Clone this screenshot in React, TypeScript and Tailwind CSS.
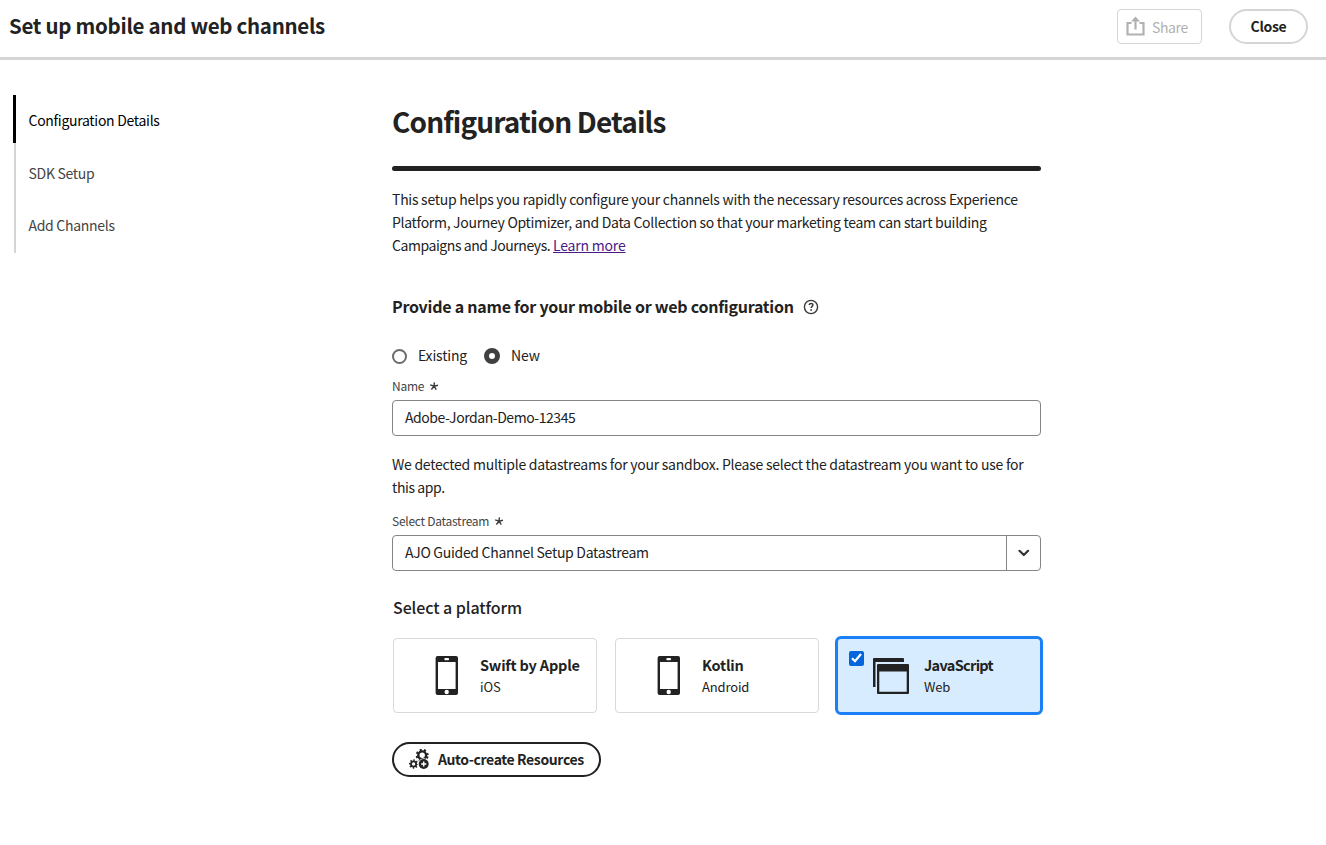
import { useState, type ReactNode } from 'react';

function ShareIcon() {
  return (
    <svg width="19" height="20" viewBox="0 0 19 20" className="-mt-px shrink-0">
      <path d="M5.5 7H1.5V18.5H17.5V7H13.5" fill="none" stroke="#b1b1b1" strokeWidth="2.2" />
      <path d="M9.5 13.5V3" stroke="#b1b1b1" strokeWidth="2.2" />
      <path d="M9.5 0.4L14 5.4H5Z" fill="#b1b1b1" />
    </svg>
  );
}

function HelpIcon() {
  return (
    <svg width="16" height="16" viewBox="0 0 16 16" fill="none" stroke="#3a3a3a" className="shrink-0">
      <circle cx="8" cy="8" r="6.6" strokeWidth="1.4" />
      <path d="M6.1 6.1C6.3 4.9 7.1 4.5 8 4.5C9.1 4.5 9.9 5.1 9.9 6.1C9.9 7.3 8.1 7.5 8.1 9.1" strokeWidth="1.4" />
      <circle cx="8.1" cy="11" r="0.9" fill="#3a3a3a" stroke="none" />
    </svg>
  );
}

function Required() {
  return (
    <svg width="8" height="8" viewBox="0 0 8 8" stroke="#3a3a3a" strokeWidth="1.4" className="shrink-0">
      <path d="M4 4.2L4.4 0.4M4 4.2L8 3.3M4 4.2L6.3 7.6M4 4.2L1.4 7.5M4 4.2L0.2 2.8" />
    </svg>
  );
}

function PhoneIcon() {
  return (
    <svg width="24" height="40" viewBox="0 0 24 40" className="shrink-0">
      <rect x="0.6" y="0" width="22.4" height="39" rx="2" fill="#222" />
      <rect x="3" y="6" width="17.6" height="27" fill="#fff" />
      <rect x="9.3" y="2.1" width="4.8" height="2.2" rx="1.1" fill="#fff" />
      <circle cx="11.7" cy="36" r="2.2" fill="#fff" />
    </svg>
  );
}

function WindowsIcon() {
  return (
    <svg width="36" height="36" viewBox="0 0 36 36" className="shrink-0">
      <path d="M0 29V1Q0 0 1 0H30Q31 0 31 1V4H2.5V29Z" fill="#222" />
      <path fillRule="evenodd" d="M5 6H35Q36 6 36 7V35Q36 36 35 36H5Q4 36 4 35V7Q4 6 5 6ZM6.3 13.5V33.8H33.7V13.5Z" fill="#222" />
    </svg>
  );
}

function GearsIcon() {
  return (
    <svg width="20" height="20" viewBox="0 0 20 20" fill="none" stroke="#222" className="-mt-px shrink-0">
      <circle cx="13.2" cy="6.3" r="3.9" strokeWidth="2.4" />
      <circle cx="13.2" cy="6.3" r="5.5" strokeWidth="2" strokeDasharray="2.1 2.22" strokeDashoffset="-1.1" />
      <circle cx="4.6" cy="15" r="2.6" strokeWidth="1.8" />
      <circle cx="4.6" cy="15" r="3.9" strokeWidth="1.6" strokeDasharray="1.4 1.663" strokeDashoffset="0.7" />
      <circle cx="14.7" cy="15" r="5.7" fill="#fff" stroke="none" />
      <circle cx="14.7" cy="15" r="5" fill="#222" stroke="none" />
      <path d="M14.7 12.4V17.6M12.1 15H17.3" stroke="#fff" strokeWidth="1.5" />
    </svg>
  );
}

function Radio({ checked, onSelect, children }: { checked: boolean; onSelect: () => void; children: ReactNode }) {
  return (
    <label className="flex items-center gap-[11px]">
      <input type="radio" name="mode" checked={checked} onChange={onSelect} className="sr-only" />
      <span
        className={
          checked
            ? 'size-4 rounded-full border-[5px] border-[#404040] bg-white'
            : 'size-[15px] rounded-full border-2 border-[#6b6b6b] bg-white'
        }
      />
      <span className="pb-[2px] tracking-[-0.17px]">{children}</span>
    </label>
  );
}

function Platform({ name, kind, tight }: { name: string; kind: string; tight?: boolean }) {
  return (
    <div className="ml-[21px] whitespace-nowrap">
      <div className={tight ? 'text-[14.5px] leading-[22px] font-bold tracking-[-0.68px]' : 'text-[14.5px] leading-[22px] font-bold tracking-[-0.2px]'}>
        {name}
      </div>
      <div className="text-[13px] leading-[21px] tracking-[-0.15px]">{kind}</div>
    </div>
  );
}

export default function App() {
  const [mode, setMode] = useState('new');
  return (
    <div className="h-[845px] overflow-hidden bg-white font-['Noto_Sans_CJK_SC',sans-serif] text-sm tracking-[-0.29px] text-[#222]">
      <header className="flex h-[60px] items-start justify-between border-b-[3px] border-[#d5d5d5] pt-[9px] pr-[18px] pl-[9px]">
        <h1 className="text-[20.5px] leading-[33px] font-bold tracking-[-0.3px]">Set up mobile and web channels</h1>
        <div className="flex gap-[27px]">
          <button disabled className="flex h-[35px] w-[85px] items-center gap-[7px] rounded border border-[#d5d5d5] pl-2 text-[#b1b1b1]">
            <ShareIcon />
            <span className="tracking-[-0.4px]">Share</span>
          </button>
          <button className="h-[35px] w-[79px] rounded-full border-2 border-[#d5d5d5] pb-px font-bold">Close</button>
        </div>
      </header>

      <div className="flex">
        <nav className="w-[392px] shrink-0 pt-[35px] pl-[13px]">
          <div className="flex h-12 items-center border-l-[3px] border-black pt-px pl-[12.5px] text-black">Configuration Details</div>
          <div className="ml-px flex h-[60px] items-center border-l-2 border-[#d5d5d5] pl-[12.5px] text-[#444]">SDK Setup</div>
          <div className="ml-px flex h-[50px] items-center border-l-2 border-[#d5d5d5] pb-[6px] pl-[12.5px] text-[#444]">Add Channels</div>
        </nav>

        <main className="w-[651px] pt-[41px]">
          <div className="w-[649px]">
            <h2 className="text-[28px] leading-10 font-bold tracking-[-0.86px]">Configuration Details</h2>
            <div className="mt-[25px] h-[5px] rounded-full bg-[#222]" />
            <p className="mt-[17px] leading-[23px] tracking-[-0.26px] whitespace-nowrap">
              This setup helps you rapidly configure your channels with the necessary resources across Experience
              <br />
              <span className="tracking-[-0.3px]">Platform, Journey Optimizer, and Data Collection so that your marketing team can start building</span>
              <br />
              <span className="tracking-[-0.44px]">Campaigns and Journeys. </span>
              <a href="#" className="tracking-[-0.18px] text-[#4b1a86] underline">Learn more</a>
            </p>

            <div className="mt-[38px] flex h-6 items-center gap-[9px]">
              <h3 className="pb-[2px] text-base font-bold tracking-[-0.25px]">Provide a name for your mobile or web configuration</h3>
              <HelpIcon />
            </div>

            <div className="mt-[27px] flex h-5 items-center gap-[17px]">
              <Radio checked={mode === 'existing'} onSelect={() => setMode('existing')}>Existing</Radio>
              <Radio checked={mode === 'new'} onSelect={() => setMode('new')}>New</Radio>
            </div>

            <div className="mt-[12px] flex h-4 items-center gap-[6px] text-xs tracking-[-0.24px] text-[#444]">
              Name <Required />
            </div>
            <div className="mt-[6px] flex h-9 items-center rounded border border-[#858585] pb-[2px] pl-3 tracking-[-0.45px]">Adobe-Jordan-Demo-12345</div>

            <p className="mt-[17px] leading-[23px] tracking-[-0.25px] whitespace-nowrap">
              We detected multiple datastreams for your sandbox. Please select the datastream you want to use for
              <br />
              <span className="tracking-[-0.4px]">this app.</span>
            </p>

            <div className="mt-[14px] flex h-4 items-center gap-[6px] text-xs tracking-[-0.26px] text-[#444]">
              Select Datastream <Required />
            </div>
            <div className="mt-[6px] flex h-9 items-center justify-between rounded border border-[#858585] pl-3">
              <span className="pb-[2px]">AJO Guided Channel Setup Datastream</span>
              <span className="flex h-full w-[34px] items-center justify-center border-l border-[#858585]">
                <svg width="12" height="8" viewBox="0 0 12 8" fill="none" stroke="#333" strokeWidth="2.2" strokeLinecap="round" strokeLinejoin="round">
                  <path d="M1.5 1.8L5.8 6L10.1 1.8" />
                </svg>
              </span>
            </div>
          </div>

          <h3 className="mt-6 ml-px text-base leading-6 font-medium tracking-[-0.08px]">Select a platform</h3>
          <div className="mt-[17px] flex h-[79px] items-center pl-px">
            <div className="mr-[18px] flex h-[75px] w-[204px] items-center rounded border border-[#d9d9d9] pl-[41px]">
              <PhoneIcon />
              <Platform name="Swift by Apple" kind="iOS" />
            </div>
            <div className="mr-4 flex h-[75px] w-[204px] items-center rounded border border-[#d9d9d9] pl-[41px]">
              <PhoneIcon />
              <Platform name="Kotlin" kind="Android" />
            </div>
            <div className="flex h-[79px] w-[208px] items-center rounded-md border-3 border-[#1b7ff5] bg-[#d7edff] pl-[11px]">
              <span className="mb-[35px] flex size-[15px] items-center justify-center rounded-xs bg-[#0265dc]">
                <svg width="11" height="10" viewBox="0 0 11 10" fill="none" stroke="#fff" strokeWidth="2.2">
                  <path d="M1 5.2L4 8.2L10 1" />
                </svg>
              </span>
              <span className="ml-[9px]"><WindowsIcon /></span>
              <div className="-ml-[6px]"><Platform name="JavaScript" kind="Web" tight /></div>
            </div>
          </div>

          <button className="mt-[27px] flex h-[35px] w-[209px] items-center gap-[9px] rounded-full border-2 border-[#222] pl-[15px] font-bold">
            <GearsIcon />
            <span className="pb-px tracking-[-0.38px]">Auto-create Resources</span>
          </button>
        </main>
      </div>
    </div>
  );
}
